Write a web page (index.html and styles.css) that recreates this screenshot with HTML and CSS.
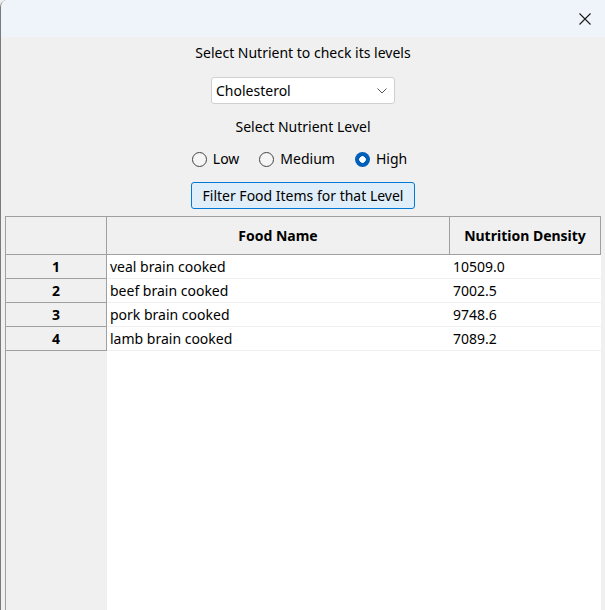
FILE: index.html
```html
<!DOCTYPE html>
<html>
<head>
<meta charset="utf-8">
<link rel="stylesheet" href="styles.css">
</head>
<body>
<div class="window">
  <div class="titlebar">
    <span class="close">
      <svg width="14" height="14" viewBox="0 0 14 14"><path d="M1.5 1.5 L12.5 12.5 M12.5 1.5 L1.5 12.5" stroke="#1a1a1a" stroke-width="1.1" fill="none"/></svg>
    </span>
  </div>
  <div class="content">
    <div class="label l1">Select Nutrient to check its levels</div>
    <div class="combo">
      <span class="combo-text">Cholesterol</span>
      <svg class="chev" width="12" height="8" viewBox="0 0 12 8"><path d="M1.5 1.5 L6 6 L10.5 1.5" stroke="#555" stroke-width="1" fill="none"/></svg>
    </div>
    <div class="label l2">Select Nutrient Level</div>
    <div class="radios">
      <label class="radio"><span class="circle"></span><span>Low</span></label>
      <label class="radio"><span class="circle"></span><span>Medium</span></label>
      <label class="radio"><span class="circle checked"></span><span>High</span></label>
    </div>
    <div class="button">Filter Food Items for that Level</div>
    <div class="grid">
      <div class="row head">
        <div class="cell corner"></div>
        <div class="cell hcell">Food Name</div>
        <div class="cell hcell">Nutrition Density</div>
      </div>
      <div class="row data">
        <div class="cell rh">1</div>
        <div class="cell dc">veal brain cooked</div>
        <div class="cell dc num">10509.0</div>
      </div>
      <div class="row data">
        <div class="cell rh">2</div>
        <div class="cell dc">beef brain cooked</div>
        <div class="cell dc num">7002.5</div>
      </div>
      <div class="row data">
        <div class="cell rh">3</div>
        <div class="cell dc">pork brain cooked</div>
        <div class="cell dc num">9748.6</div>
      </div>
      <div class="row data">
        <div class="cell rh">4</div>
        <div class="cell dc">lamb brain cooked</div>
        <div class="cell dc num">7089.2</div>
      </div>
      <div class="filler">
        <div class="filler-head"></div>
        <div class="filler-body"></div>
      </div>
    </div>
  </div>
</div>
</body>
</html>
```
FILE: styles.css
```css
* { box-sizing: border-box; }
html, body { margin: 0; padding: 0; }
body {
  width: 605px;
  height: 610px;
  overflow: hidden;
  background: #f0f0f0;
  font-family: "Noto Sans", "DejaVu Sans", sans-serif;
  font-size: 14px;
  color: #000;
}
.window {
  width: 605px;
  height: 610px;
  display: flex;
  flex-direction: column;
  border-left: 1px solid #7a7a7a;
  border-top-left-radius: 7px;
  overflow: hidden;
  background: #f0f0f0;
}
.titlebar {
  height: 37px;
  flex: none;
  background: #eef4f9;
  display: flex;
  justify-content: flex-end;
  align-items: center;
  padding-right: 13px;
}
.close { display: flex; width: 14px; height: 14px; margin-top: 1px; }
.content {
  flex: 1;
  display: flex;
  flex-direction: column;
  align-items: center;
  min-height: 0;
}
.label { line-height: 20px; height: 20px; }
.l1 { margin-top: 6px; }
.combo {
  margin-top: 14px;
  width: 184px;
  height: 27px;
  background: #fff;
  border: 1px solid #d0d0d0;
  border-radius: 3px;
  display: flex;
  align-items: center;
  justify-content: space-between;
  padding: 0 6px 0 4px;
}
.l2 { margin-top: 13px; }
.radios {
  margin-top: 12px;
  height: 20px;
  display: flex;
  align-items: center;
  gap: 20px;
  margin-left: -7px;
}
.radio { display: flex; align-items: center; gap: 6px; line-height: 20px; }
.circle {
  width: 15px;
  height: 15px;
  border-radius: 50%;
  border: 1px solid #444;
  background: #f5f5f5;
  display: inline-block;
}
.circle.checked {
  border: none;
  background: radial-gradient(circle, #fff 0 3px, #005fb8 3.5px);
}
.button {
  margin-top: 13px;
  width: 224px;
  height: 27px;
  border: 1px solid #0078d4;
  border-radius: 3px;
  background: #e0eef9;
  display: flex;
  align-items: center;
  justify-content: center;
  line-height: 20px;
}
.grid {
  margin-top: 7px;
  align-self: flex-start;
  margin-left: 4px;
  width: 596px;
  flex: 1;
  display: flex;
  flex-direction: column;
  border-left: 1px solid #a0a0a0;
  min-height: 0;
}
.row { display: grid; grid-template-columns: 101px 343px 151px; flex: none; }
.head { height: 39px; border-top: 1px solid #a0a0a0; }
.cell { display: flex; align-items: center; white-space: nowrap; }
.corner, .hcell {
  background: #f0f0f0;
  border-right: 1px solid #a0a0a0;
  border-bottom: 1px solid #a0a0a0;
}
.hcell { justify-content: center; font-weight: bold; }
.data { height: 24px; }
.rh {
  background: #f0f0f0;
  border-right: 1px solid #a0a0a0;
  border-bottom: 1px solid #a0a0a0;
  justify-content: center;
  font-weight: bold;
}
.dc {
  background: #fff;
  border-bottom: 1px solid #f0f0f0;
  padding-left: 3px;
}
.num { padding-left: 3px; }
.filler { flex: 1; display: flex; }
.filler-head { width: 101px; background: #f0f0f0; }
.filler-body { width: 494px; background: #fff; }
```
